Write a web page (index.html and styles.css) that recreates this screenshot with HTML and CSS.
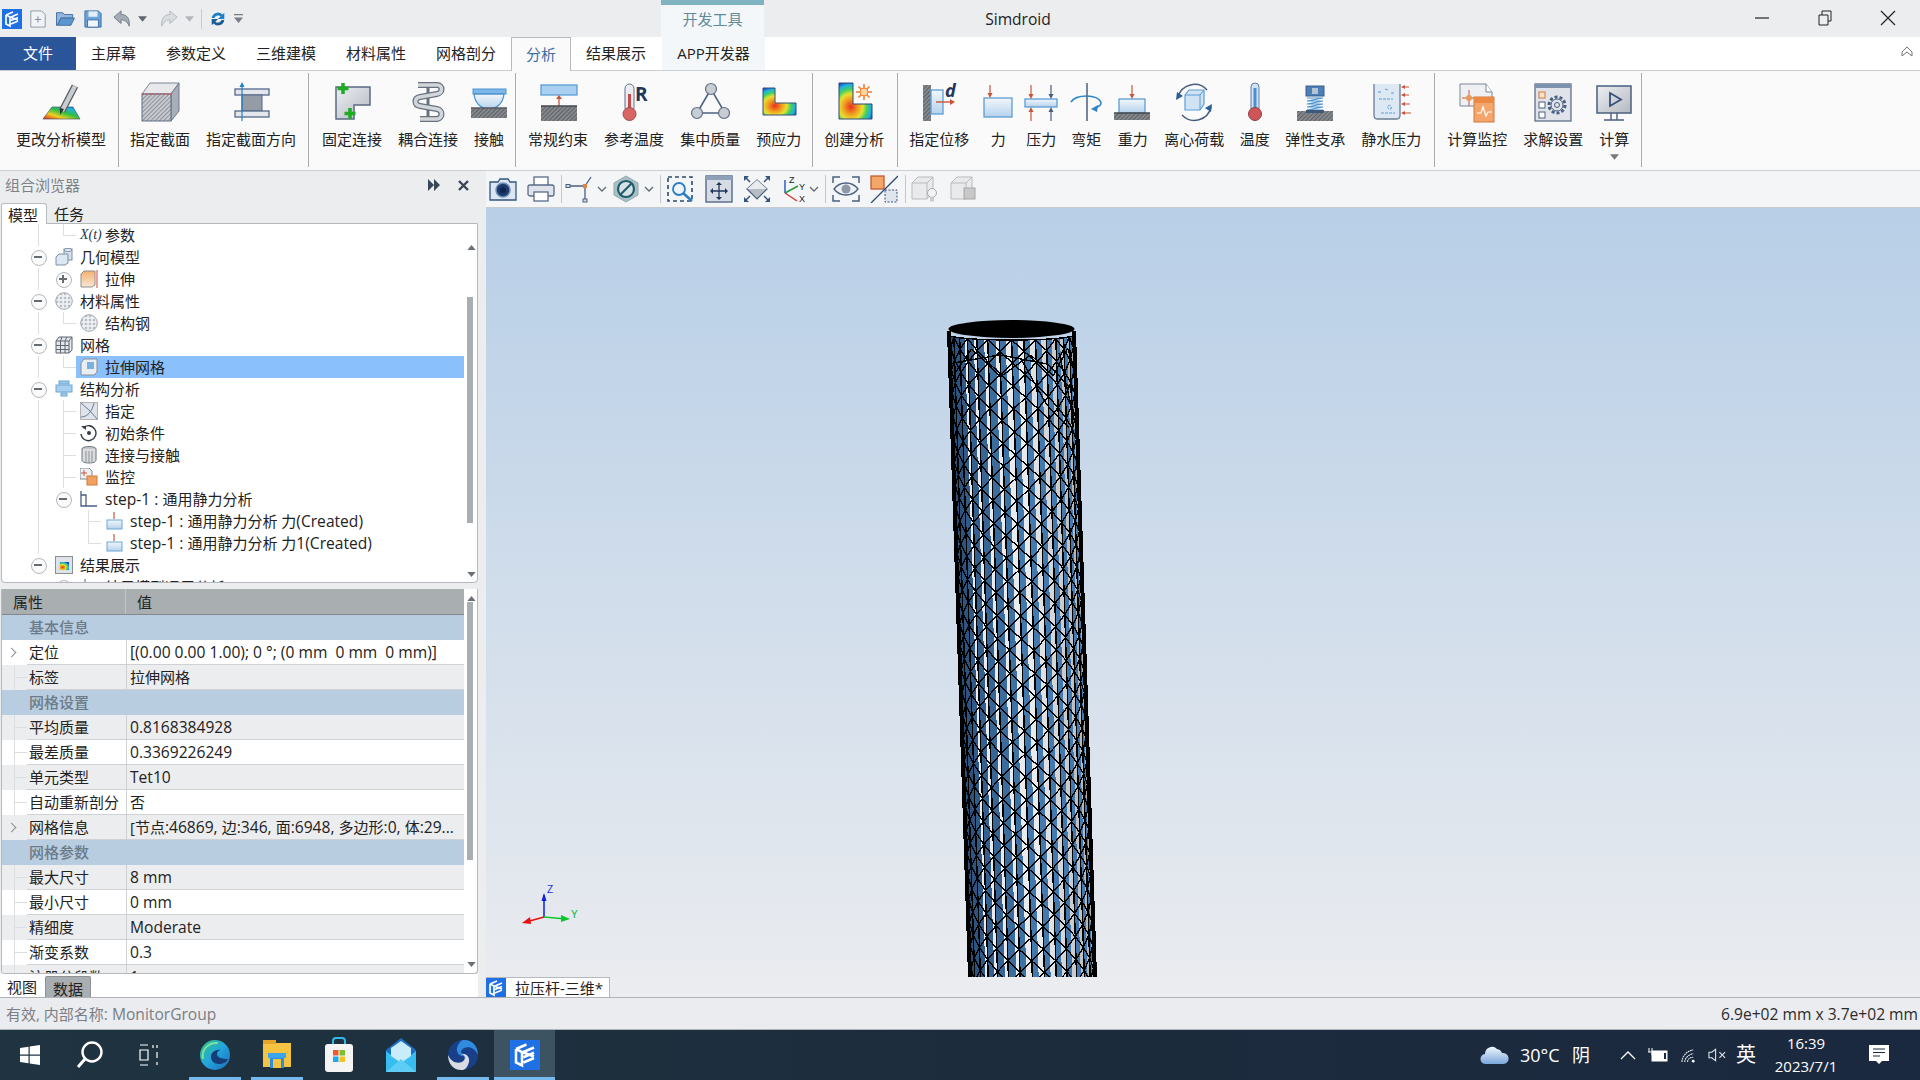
FILE: index.html
```html
<!DOCTYPE html>
<html lang="zh-CN">
<head>
<meta charset="utf-8">
<title>Simdroid</title>
<link rel="stylesheet" href="styles.css">
</head>
<body>
<svg class="defs" aria-hidden="true">
  <defs>
    <linearGradient id="rb" x1="0" y1="1" x2="1" y2="0"><stop offset="0" stop-color="#e02020"/><stop offset=".3" stop-color="#f0d020"/><stop offset=".55" stop-color="#30c040"/><stop offset=".8" stop-color="#20b0e0"/><stop offset="1" stop-color="#2040d0"/></linearGradient>
    <radialGradient id="rc" cx=".36" cy=".66" r=".72"><stop offset="0" stop-color="#e83020"/><stop offset=".3" stop-color="#f0a020"/><stop offset=".5" stop-color="#e8e030"/><stop offset=".68" stop-color="#40d060"/><stop offset=".85" stop-color="#20b0e0"/><stop offset="1" stop-color="#2040c0"/></radialGradient>
    <linearGradient id="gb" x1="0" y1="0" x2="0" y2="1"><stop offset="0" stop-color="#f2f7fc"/><stop offset="1" stop-color="#b5d2ec"/></linearGradient>
    <linearGradient id="gy" x1="0" y1="0" x2="1" y2="1"><stop offset="0" stop-color="#eceef1"/><stop offset="1" stop-color="#b4b9c2"/></linearGradient>
    <linearGradient id="go" x1="0" y1="0" x2="0" y2="1"><stop offset="0" stop-color="#f4b070"/><stop offset="1" stop-color="#fbe6d2"/></linearGradient>
    <pattern id="hatch" width="3" height="3" patternUnits="userSpaceOnUse" patternTransform="rotate(45)"><rect width="3" height="3" fill="#c6c9ce"/><rect width="1" height="3" fill="#8f949b"/></pattern>
    <pattern id="gnd" width="3" height="3" patternUnits="userSpaceOnUse" patternTransform="rotate(45)"><rect width="3" height="3" fill="#85898e"/><rect width="1" height="3" fill="#5d6166"/></pattern>
    <pattern id="dots" width="4" height="4" patternUnits="userSpaceOnUse"><rect width="4" height="4" fill="#eef0f3"/><circle cx="2" cy="2" r="1.300" fill="#b9bec6"/></pattern>
    <symbol id="logo" viewBox="0 0 20 20"><rect width="20" height="20" fill="#1f6fe5"/><path d="M4 6 11 3M4 6v9l4 2V8L4 6M9 8l7-3M9 11.500l7-3M9 15l7-3M8 8l8 3" fill="none" stroke="#fff" stroke-width="1.700"/></symbol>
    <symbol id="mat" viewBox="0 0 18 18"><circle cx="9" cy="9" r="8.300" fill="url(#dots)" stroke="#a4a9b0"/></symbol>
    <symbol id="frc" viewBox="0 0 18 18"><rect x="2" y="8" width="15" height="9" fill="url(#gb)" stroke="#6ba6d6"/><path d="M9 0v7" stroke="#c8553a" stroke-width="1.200"/></symbol>
    <symbol id="cube" viewBox="0 0 28 28"><path d="M2 8 8 2h15v15l-6 7H2z" fill="#e9eaeb" stroke="#b9bbbe"/><path d="M2 8h15v16M17 8l6-6" fill="none" stroke="#b9bbbe"/></symbol>
  </defs>
</svg>

<div class="app">
  <header class="titlebar">
    <div class="qat">
      <svg class="q22" viewBox="0 0 20 20"><use href="#logo"/></svg>
      <svg class="qi q-new" viewBox="0 0 20 20"><path d="M2 1h12l4 4v14H2z" fill="#f1f3f6" stroke="#8a94a3"/><path d="M10 7v7M6.500 10.500h7" stroke="#7b8594"/></svg>
      <svg class="qi q-open" viewBox="0 0 22 20"><path d="M1 17V3h7l2 2h9v4H6L2 17z" fill="#8fb5dc" stroke="#3f6b9e"/><path d="M2 17 6 9h15l-4 8z" fill="#5d95cf" stroke="#3f6b9e"/></svg>
      <svg class="qi q-save" viewBox="0 0 20 20"><path d="M1 1h15l3 3v15H1z" fill="#6ca4d9" stroke="#376a9f"/><rect x="5" y="1.500" width="10" height="6" fill="#e2edf7"/><rect x="4" y="11" width="12" height="8" fill="#f2f6fa" stroke="#376a9f"/></svg>
      <svg class="qi q-undo" viewBox="0 0 20 20"><path d="M1 8 9 1v4c6 0 10 4 9 13-2-5-5-7-9-7v4z" fill="#a5acb6" stroke="#6f7784"/></svg>
      <svg class="caret q-c1" viewBox="0 0 10 6"><path d="M0 0h10L5 6z" fill="#606770"/></svg>
      <svg class="qi q-redo" viewBox="0 0 20 20"><path d="M19 8 11 1v4C5 5 1 9 2 18c2-5 5-7 9-7v4z" fill="#d9dce0" stroke="#b1b6bd"/></svg>
      <svg class="caret q-c2" viewBox="0 0 10 6"><path d="M0 0h10L5 6z" fill="#b3b7bd"/></svg>
      <span class="q-sep"></span>
      <svg class="qi q-ref" viewBox="0 0 20 20"><path d="M3 9a7 7 0 0 1 12-4l2-2v7h-7l3-3a4.500 4.500 0 0 0-7 2z" fill="#1f7fc4"/><path d="M17 11a7 7 0 0 1-12 4l-2 2v-7h7l-3 3a4.500 4.500 0 0 0 7-2z" fill="#1b5d96"/></svg>
      <svg class="caret q-c3" viewBox="0 0 10 10"><path d="M0 0h10v1.500H0zM0 4h10L5 10z" fill="#767c85"/></svg>
    </div>
    <div class="ctx-tab">开发工具</div>
    <div class="app-name"><span class="lat">Simdroid</span></div>
    <div class="winbtns">
      <svg class="wb" viewBox="0 0 16 16"><path d="M1 8h14" stroke="#222" stroke-width="1.200"/></svg>
      <svg class="wb" viewBox="0 0 16 16"><path d="M2 5h9v10H2zM5 5V1h9v10h-3" fill="none" stroke="#222"/></svg>
      <svg class="wb" viewBox="0 0 16 16"><path d="M1 1l14 14M15 1 1 15" stroke="#222" stroke-width="1.200"/></svg>
    </div>
  </header>

  <nav class="tabs">
    <div class="tab file">文件</div>
    <div class="tab">主屏幕</div>
    <div class="tab">参数定义</div>
    <div class="tab">三维建模</div>
    <div class="tab">材料属性</div>
    <div class="tab">网格剖分</div>
    <div class="tab active">分析</div>
    <div class="tab">结果展示</div>
    <div class="tab app-tab">APP开发器</div>
    <svg class="collapse" viewBox="0 0 12 12"><path d="M6 1 11 6v4l-5-4-5 4V6z" fill="#fff" stroke="#777"/></svg>
  </nav>

  <section class="ribbon">
    <div class="group first">
      <div class="rb"><svg class="ri" viewBox="0 0 40 44"><polygon points="2,39 39,39 32,27 11,27" fill="url(#rb)" stroke="#3a3f55" stroke-width=".6"/><path d="M34 6 21 31" stroke="#55585e" stroke-width="7"/><path d="M34 6 21 31" stroke="#c9ccd0" stroke-width="4.500"/><path d="M23 29 19 35l0-7z" fill="#333"/></svg><span>更改分析模型</span></div>
    </div>
    <div class="group">
      <div class="rb"><svg class="ri" viewBox="0 0 40 44"><polygon points="2,14 31,14 39,3 10,3" fill="#e6e8eb" stroke="#7d8794"/><polygon points="31,14 39,3 39,31 31,41" fill="#a9afb9" stroke="#6f7986"/><rect x="2" y="14" width="29" height="27" fill="url(#hatch)" stroke="#5f6f88"/><path d="M2 14h29" stroke="#e04040" stroke-dasharray="2 1.500"/></svg><span>指定截面</span></div>
      <div class="rb"><svg class="ri" viewBox="0 0 40 44"><rect x="4" y="9" width="34" height="6" fill="#e3e7ec" stroke="#55678a" stroke-width="1.300"/><rect x="11" y="15" width="20" height="16" fill="#969ca5" stroke="#55678a"/><rect x="4" y="31" width="34" height="6" fill="#e3e7ec" stroke="#55678a" stroke-width="1.300"/><path d="M11 5v36" stroke="#1f80c8" stroke-width="1.200"/><path d="M11 2 8.500 7h5z" fill="#1f80c8"/></svg><span>指定截面方向</span></div>
    </div>
    <div class="group g3">
      <div class="rb"><svg class="ri" viewBox="0 0 40 44"><path d="M4 7h34v18H22v14H4z" fill="url(#gy)" stroke="#5a6b85" stroke-width="1.500"/><path d="M11 3v11M5.500 8.500h11M18 28v11M12.500 33.500h11" stroke="#1dab23" stroke-width="3.500"/></svg><span>固定连接</span></div>
      <div class="rb"><svg class="ri" viewBox="0 0 40 44"><path d="M20 3v38" stroke="#68727f" stroke-width="3"/><path d="M10 5h19c6 0 6 8 0 9L12 17c-6 1-6 8 0 9l17 3c6 1 6 9 0 10H12" fill="none" stroke="#68727f" stroke-width="6"/><path d="M10 5h19c6 0 6 8 0 9L12 17c-6 1-6 8 0 9l17 3c6 1 6 9 0 10H12" fill="none" stroke="#d2d6db" stroke-width="3.500"/></svg><span>耦合连接</span></div>
      <div class="rb"><svg class="ri" viewBox="0 0 40 44"><rect x="4" y="9" width="33" height="5" fill="#7cb7e6" stroke="#4d94cf"/><path d="M5 14c1 10 8 15 15 15s14-5 15-15z" fill="url(#gb)" stroke="#4d94cf" stroke-width="1.300"/><rect x="2" y="28" width="36" height="10" fill="url(#gnd)"/><path d="M2 28h36" stroke="#55585e" stroke-width="1.400"/></svg><span>接触</span></div>
    </div>
    <div class="group g4">
      <div class="rb"><svg class="ri" viewBox="0 0 40 44"><rect x="3" y="5" width="36" height="10" fill="#a9d0f0" stroke="#5c9dd4" stroke-width="1.300"/><path d="M21 26V17" stroke="#c8553a" stroke-width="1.300"/><path d="M21 15l-3 4h6z" fill="#c8553a"/><rect x="3" y="26" width="36" height="15" fill="url(#gnd)"/><path d="M3 26h36" stroke="#45484e" stroke-width="1.400"/></svg><span>常规约束</span></div>
      <div class="rb"><svg class="ri" viewBox="0 0 40 44"><rect x="11" y="4" width="9" height="28" rx="4.500" fill="#e9edf2" stroke="#5f6f88"/><rect x="14" y="14" width="3" height="20" fill="#c9494a"/><circle cx="15.500" cy="34" r="6.500" fill="#d96565" stroke="#9e4a4a"/><text class="ic-r" x="21" y="21">R</text></svg><span>参考温度</span></div>
      <div class="rb"><svg class="ri" viewBox="0 0 40 44"><path d="M21 9 7 33h28z" fill="none" stroke="#4e6285" stroke-width="1.600"/><circle cx="21" cy="9" r="5.500" fill="#c8ccd3" stroke="#5f6f88" stroke-width="1.200"/><circle cx="7" cy="33" r="5.500" fill="#c8ccd3" stroke="#5f6f88" stroke-width="1.200"/><circle cx="34" cy="33" r="5.500" fill="#c8ccd3" stroke="#5f6f88" stroke-width="1.200"/></svg><span>集中质量</span></div>
      <div class="rb"><svg class="ri" viewBox="0 0 40 44"><path d="M4 8h12v15h21v12H4z" fill="url(#rc)" stroke="#34507a"/></svg><span>预应力</span></div>
    </div>
    <div class="group g5">
      <div class="rb"><svg class="ri" viewBox="0 0 40 44"><path d="M5 3h14v21h19v15H5z" fill="url(#rc)" stroke="#2c4a78"/><path d="M30 4v16M22 12h16M24.500 6.500l11 11M35.500 6.500l-11 11" stroke="#f08030" stroke-width="1.600"/><circle cx="30" cy="12" r="4" fill="#fbd5a0" stroke="#f08030"/></svg><span>创建分析</span></div>
    </div>
    <div class="group g5">
      <div class="rb"><svg class="ri" viewBox="0 0 40 44"><rect x="4" y="5" width="8" height="36" fill="url(#gnd)"/><rect x="12" y="10" width="12" height="24" fill="url(#gb)" stroke="#5c9dd4" stroke-width="1.300"/><path d="M17 22h16" stroke="#c8553a" stroke-width="1.400"/><path d="M36 22l-5-3v6z" fill="#c8553a"/><text class="ic-d" x="26" y="17">d</text></svg><span>指定位移</span></div>
      <div class="rb w42"><svg class="ri" viewBox="0 0 40 44"><rect x="6" y="18" width="28" height="19" fill="url(#gb)" stroke="#5c9dd4" stroke-width="1.300"/><path d="M12 5v11" stroke="#c8553a" stroke-width="1.200"/><path d="M12 18l-2.500-5h5z" fill="#c8553a"/></svg><span>力</span></div>
      <div class="rb w44"><svg class="ri" viewBox="0 0 40 44"><rect x="4" y="19" width="32" height="8" fill="url(#gb)" stroke="#5c9dd4" stroke-width="1.300"/><path d="M10 5v12M10 29v12" stroke="#c8553a" stroke-width="1.200"/><path d="M10 19l-2.500-5h5zM10 27l-2.500 5h5z" fill="#c8553a"/><path d="M30 5v12M30 29v12" stroke="#4a5f80" stroke-width="1.200"/><path d="M30 19l-2.500-5h5zM30 27l-2.500 5h5z" fill="#4a5f80"/></svg><span>压力</span></div>
      <div class="rb w46"><svg class="ri" viewBox="0 0 40 44"><path d="M21 3v38" stroke="#4a5f80" stroke-width="1.500"/><path d="M5 22c3-5 10-6 16-6s13 2 14 7c0 3-3 4-6 5" fill="none" stroke="#2d84c4" stroke-width="1.600"/><path d="M25 29l7-4-1 7z" fill="#2d84c4"/></svg><span>弯矩</span></div>
      <div class="rb w47"><svg class="ri" viewBox="0 0 40 44"><rect x="6" y="19" width="26" height="14" fill="url(#gb)" stroke="#5c9dd4" stroke-width="1.300"/><path d="M19 5v11" stroke="#c8553a" stroke-width="1.200"/><path d="M19 19l-2.500-5h5z" fill="#c8553a"/><rect x="1" y="33" width="36" height="7" fill="url(#gnd)"/><path d="M1 33h36" stroke="#45484e" stroke-width="1.300"/></svg><span>重力</span></div>
      <div class="rb"><svg class="ri" viewBox="0 0 40 44"><path d="M11 15 15 10h15v14l-4 6H11z" fill="#cfe3f5" stroke="#5c9dd4" stroke-width="1.200"/><path d="M11 15h15v15M26 15l4-5" fill="none" stroke="#5c9dd4"/><path d="M4 17A17 17 0 0 1 33 10M37 27A17 17 0 0 1 8 35" fill="none" stroke="#4a5f80" stroke-width="1.500"/><path d="M2 20 3 12l6 4zM38 24l-1 8-6-4z" fill="#2d5f94"/></svg><span>离心荷载</span></div>
      <div class="rb w45"><svg class="ri" viewBox="0 0 40 44"><rect x="16" y="3" width="8" height="30" rx="4" fill="#cfe3f5" stroke="#5f7fa8"/><rect x="18.500" y="8" width="3" height="26" fill="#4d8fd0"/><circle cx="20" cy="34" r="6.500" fill="#cf5558" stroke="#8f4044"/></svg><span>温度</span></div>
      <div class="rb"><svg class="ri" viewBox="0 0 40 44"><rect x="11" y="6" width="18" height="10" fill="#4a7fb8" stroke="#3a5f8a"/><rect x="17" y="8" width="6" height="6" fill="#b4c4d4"/><path d="M12 18h16L12 21h16L12 24h16L12 27h16L12 30h16" fill="none" stroke="#4d94cf" stroke-width="1.100"/><rect x="2" y="31" width="36" height="10" fill="url(#gnd)"/><rect x="11" y="30" width="18" height="3" fill="#3f5878"/></svg><span>弹性支承</span></div>
      <div class="rb"><svg class="ri" viewBox="0 0 40 44"><path d="M3 4v31c0 2 1 4 3 4h20c2 0 3-2 3-4V4" fill="#dce9f5" stroke="#6b7c94" stroke-width="1.300"/><path d="M7 12h4M14 9l3 1M20 13h4M8 19h14M17 26c2-2 4 1 3 3-2 1-4-1-3-3M10 33h14" stroke="#5c9dd4" fill="none" stroke-dasharray="3 1"/><path d="M32 7h6M32 15h6M32 24h7M32 33h8" stroke="#c8553a" stroke-width="1.200"/><path d="M30 7l4-2v4zM30 15l4-2v4zM30 24l4-2v4zM30 33l4-2v4z" fill="#c8553a"/></svg><span>静水压力</span></div>
    </div>
    <div class="group g7">
      <div class="rb"><svg class="ri" viewBox="0 0 40 44"><path d="M3 4h26l6 8v14H3z" fill="#eef0f3" stroke="#7d8794"/><path d="M29 4v8h6" fill="#fff" stroke="#7d8794"/><path d="M12 10v16M5 18h15" stroke="#c8553a"/><circle cx="12" cy="18" r="3" fill="#e99a5a"/><rect x="17" y="17" width="20" height="25" fill="#f3a56b" stroke="#d07a3a"/><rect x="17" y="17" width="20" height="6" fill="#ec8a45"/><path d="M20 33h4l2-6 3 9 2-4h4" fill="none" stroke="#fff" stroke-width="1.200"/></svg><span>计算监控</span></div>
      <div class="rb"><svg class="ri" viewBox="0 0 40 44"><rect x="2" y="4" width="36" height="37" fill="#e0e4ea" stroke="#5f6f88" stroke-width="1.300"/><rect x="2" y="4" width="36" height="4" fill="#7d93b0"/><rect x="6" y="12" width="6" height="6" fill="#fde3cc" stroke="#d07a3a"/><rect x="6" y="22" width="6" height="6" fill="#fff" stroke="#4a5f80"/><rect x="6" y="32" width="6" height="6" fill="#fff" stroke="#4a5f80"/><circle cx="24" cy="25" r="8" fill="none" stroke="#4a5f80" stroke-width="3" stroke-dasharray="3 2"/><circle cx="24" cy="25" r="6" fill="none" stroke="#4a5f80"/><circle cx="24" cy="25" r="2.500" fill="#e0e4ea" stroke="#4a5f80"/></svg><span>求解设置</span></div>
      <div class="rb calc"><svg class="ri" viewBox="0 0 40 44"><rect x="3" y="6" width="34" height="27" fill="url(#gy)" stroke="#4a5f80" stroke-width="1.500"/><path d="M16 13v13l11-6.500z" fill="none" stroke="#34507a" stroke-width="1.800"/><path d="M17 33v7M23 33v7M10 40h20" stroke="#4a5f80" stroke-width="1.400"/></svg><span>计算</span><svg class="calc-caret" viewBox="0 0 10 6"><path d="M0 0h10L5 6z" fill="#777"/></svg></div>
    </div>
  </section>

  <main class="main">
    <aside class="left">
      <div class="panel-head">
        <span class="ph-title">组合浏览器</span>
        <svg class="ph-i1" viewBox="0 0 13 12"><path d="M0 0 6 6 0 12zM6 0l6 6-6 6z" fill="#3a4556"/></svg>
        <svg class="ph-i2" viewBox="0 0 11 11"><path d="M1 1l9 9M10 1l-9 9" stroke="#3a4556" stroke-width="2.400"/></svg>
      </div>
      <div class="ptabs"><span class="ptab on">模型</span><span class="ptab">任务</span></div>
      <div class="tree">
        <div class="row"><i class="c"></i><i class="c v"></i><i class="c l"></i><div class="lab"><span class="xt">X(t)</span><span>参数</span></div></div>
        <div class="row"><i class="c"></i><i class="c x m"></i><div class="lab"><svg class="ti" viewBox="0 0 18 18"><rect x="9" y="1" width="8" height="11" fill="#d5e3f0" stroke="#7d8fa5"/><ellipse cx="13" cy="2" rx="4" ry="1.500" fill="#eef3f8" stroke="#7d8fa5"/><path d="M1 9 4 6h9v9l-3 2H1z" fill="#dbe7f3" stroke="#7d8fa5"/></svg><span>几何模型</span></div></div>
        <div class="row"><i class="c"></i><i class="c v"></i><i class="c x p"></i><div class="lab"><svg class="ti" viewBox="0 0 18 18"><path d="M1 4 4 1h11v14l-3 2H1z" fill="url(#go)" stroke="#8a8f96"/><path d="M17 0v18" stroke="#d04040"/></svg><span>拉伸</span></div></div>
        <div class="row"><i class="c"></i><i class="c x m"></i><div class="lab"><svg class="ti" viewBox="0 0 18 18"><use href="#mat"/></svg><span>材料属性</span></div></div>
        <div class="row"><i class="c"></i><i class="c v"></i><i class="c l"></i><div class="lab"><svg class="ti" viewBox="0 0 18 18"><use href="#mat"/></svg><span>结构钢</span></div></div>
        <div class="row"><i class="c"></i><i class="c x m"></i><div class="lab"><svg class="ti" viewBox="0 0 18 18"><path d="M1 5 4 1h13v13l-3 3H1z" fill="#e4e7eb" stroke="#5f6771"/><path d="M1 5h13v12M14 5l3-4M5.500 5v12M10 5v12M1 9.500h13M1 13.500h13M7 1 5.500 5M12 1l-2 4" fill="none" stroke="#5f6771"/></svg><span>网格</span></div></div>
        <div class="row"><i class="c"></i><i class="c v"></i><i class="c l"></i><div class="lab sel"><svg class="ti" viewBox="0 0 18 18"><path d="M1 5 4 1h13v13l-3 3H1z" fill="#e9eef3" stroke="#8a8f96"/><rect x="7" y="4" width="7" height="7" fill="#77b2df"/></svg><span>拉伸网格</span></div></div>
        <div class="row"><i class="c"></i><i class="c x m"></i><div class="lab"><svg class="ti" viewBox="0 0 18 18"><rect x="4" y="1" width="10" height="3" fill="#9fc9ea" stroke="#6ba6d6"/><rect x="1" y="5" width="16" height="7" fill="#a8d0ee" stroke="#6ba6d6"/><rect x="6" y="13" width="6" height="3" fill="#9fc9ea" stroke="#6ba6d6"/></svg><span>结构分析</span></div></div>
        <div class="row"><i class="c"></i><i class="c v"></i><i class="c t"></i><div class="lab"><svg class="ti" viewBox="0 0 18 18"><rect x="0.500" y="0.500" width="17" height="17" fill="#e1e3e7" stroke="#b0b4ba"/><path d="M1 1 10 9 17 17M1 15c6 0 11-5 13-14" fill="none" stroke="#5a7ea5"/></svg><span>指定</span></div></div>
        <div class="row"><i class="c"></i><i class="c v"></i><i class="c t"></i><div class="lab"><svg class="ti" viewBox="0 0 18 18"><path d="M3 4a7.500 7.500 0 1 1-2 6" fill="none" stroke="#333c48" stroke-width="1.400"/><path d="M1 2h5v4z" fill="#333c48"/><circle cx="9" cy="9" r="2" fill="#333c48"/></svg><span>初始条件</span></div></div>
        <div class="row"><i class="c"></i><i class="c v"></i><i class="c t"></i><div class="lab"><svg class="ti" viewBox="0 0 18 18"><ellipse cx="9" cy="3" rx="7" ry="2.500" fill="#c2c6cb" stroke="#6e7680"/><path d="M2 3v11c0 2 3 3 7 3s7-1 7-3V3" fill="#dadcdf" stroke="#6e7680"/><path d="M6 5v11M9 5v12M12 5v11" stroke="#8d939b"/></svg><span>连接与接触</span></div></div>
        <div class="row"><i class="c"></i><i class="c v"></i><i class="c t"></i><div class="lab"><svg class="ti" viewBox="0 0 18 18"><path d="M0 0h9l3 3v8H0z" fill="#eef0f3" stroke="#7d8794"/><path d="M4 2v6M1 5h6" stroke="#c8553a"/><rect x="7" y="8" width="10" height="9" fill="#f0a060" stroke="#d07a3a"/></svg><span>监控</span></div></div>
        <div class="row"><i class="c"></i><i class="c v"></i><i class="c x m"></i><div class="lab"><svg class="ti" viewBox="0 0 18 18"><path d="M1 1v15h16M1 5h5v11" fill="none" stroke="#4a5f80" stroke-width="1.300"/></svg><span><span class="lat">step-1 : </span>通用静力分析</span></div></div>
        <div class="row"><i class="c"></i><i class="c v"></i><i class="c"></i><i class="c t"></i><div class="lab"><svg class="ti" viewBox="0 0 18 18"><use href="#frc"/></svg><span><span class="lat">step-1 : </span>通用静力分析 力<span class="lat">(Created)</span></span></div></div>
        <div class="row"><i class="c"></i><i class="c v"></i><i class="c"></i><i class="c l"></i><div class="lab"><svg class="ti" viewBox="0 0 18 18"><use href="#frc"/></svg><span><span class="lat">step-1 : </span>通用静力分析 力<span class="lat">1(Created)</span></span></div></div>
        <div class="row"><i class="c"></i><i class="c x m"></i><div class="lab"><svg class="ti" viewBox="0 0 18 18"><rect x="0.500" y="0.500" width="17" height="17" fill="#dfe2e6" stroke="#8a8f96"/><path d="M5 6h9v8H4z" fill="url(#rc)"/></svg><span>结果展示</span></div></div>
        <div class="row"><i class="c"></i><i class="c"></i><i class="c x m"></i><div class="lab"><svg class="ti" viewBox="0 0 18 18"><path d="M5 1v15h12" fill="none" stroke="#4a5f80"/></svg><span>结果模型通用分析</span></div></div>
        <svg class="sb-up" viewBox="0 0 10 6"><path d="M5 0l5 6H0z" fill="#6a7078"/></svg>
        <div class="sb-thumb tree-thumb"></div>
        <svg class="sb-dn" viewBox="0 0 10 6"><path d="M0 0h10L5 6z" fill="#6a7078"/></svg>
      </div>
      <div class="props">
        <div class="phead"><span class="ph-k">属性</span><span class="ph-v">值</span></div>
        <div class="prow group-r"><span class="pi"></span><span class="pk">基本信息</span></div>
        <div class="prow"><span class="pi chev"></span><span class="pk">定位</span><span class="pv lat">[(0.00 0.00 1.00); 0 °; (0 mm &nbsp;0 mm &nbsp;0 mm)]</span></div>
        <div class="prow alt"><span class="pi gl"></span><span class="pk">标签</span><span class="pv">拉伸网格</span></div>
        <div class="prow group-r"><span class="pi"></span><span class="pk">网格设置</span></div>
        <div class="prow alt"><span class="pi gl"></span><span class="pk">平均质量</span><span class="pv lat">0.8168384928</span></div>
        <div class="prow"><span class="pi gl"></span><span class="pk">最差质量</span><span class="pv lat">0.3369226249</span></div>
        <div class="prow alt"><span class="pi gl"></span><span class="pk">单元类型</span><span class="pv lat">Tet10</span></div>
        <div class="prow"><span class="pi gl"></span><span class="pk">自动重新剖分</span><span class="pv">否</span></div>
        <div class="prow alt"><span class="pi chev"></span><span class="pk">网格信息</span><span class="pv">[节点<span class="lat">:46869, </span>边<span class="lat">:346, </span>面<span class="lat">:6948, </span>多边形<span class="lat">:0, </span>体<span class="lat">:29...</span></span></div>
        <div class="prow group-r"><span class="pi"></span><span class="pk">网格参数</span></div>
        <div class="prow alt"><span class="pi gl"></span><span class="pk">最大尺寸</span><span class="pv lat">8 mm</span></div>
        <div class="prow"><span class="pi gl"></span><span class="pk">最小尺寸</span><span class="pv lat">0 mm</span></div>
        <div class="prow alt"><span class="pi gl"></span><span class="pk">精细度</span><span class="pv lat">Moderate</span></div>
        <div class="prow"><span class="pi gl"></span><span class="pk">渐变系数</span><span class="pv lat">0.3</span></div>
        <div class="prow alt"><span class="pi gl"></span><span class="pk">注册分段数</span><span class="pv lat">1</span></div>
        <svg class="sb-up p-up" viewBox="0 0 10 6"><path d="M5 0l5 6H0z" fill="#6a7078"/></svg>
        <div class="sb-thumb prop-thumb"></div>
        <svg class="sb-dn p-dn" viewBox="0 0 10 6"><path d="M0 0h10L5 6z" fill="#6a7078"/></svg>
      </div>
      <div class="btabs"><span class="btab">视图</span><span class="btab on">数据</span></div>
    </aside>

    <section class="right">
      <div class="vtool">
        <svg class="vi" viewBox="0 0 28 28"><path d="M1 7h8l2-3h8l2 3h6v18H1z" fill="#dbe6f2" stroke="#34547e" stroke-width="1.300"/><circle cx="14" cy="15" r="7" fill="#1d3a6d" stroke="#6e8fb5" stroke-width="1.500"/><circle cx="14" cy="15" r="3" fill="#10254d"/></svg>
        <svg class="vi ml10" viewBox="0 0 28 28"><rect x="7" y="2" width="14" height="9" fill="#fff" stroke="#5a6b85" stroke-width="1.300"/><rect x="1" y="10" width="26" height="11" rx="2" fill="#dfe4ea" stroke="#5a6b85" stroke-width="1.300"/><rect x="7" y="17" width="14" height="9" fill="#fff" stroke="#5a6b85" stroke-width="1.300"/></svg>
        <span class="vsep ml6"></span>
        <svg class="vi wide ml3" viewBox="0 0 32 28"><path d="M3 11h17v15M20 11 26 2" fill="none" stroke="#4a5f80" stroke-width="1.300"/><rect x="1" y="9.500" width="4" height="3" fill="#d6dae0" stroke="#4a5f80"/><rect x="18" y="24" width="4" height="3" fill="#d6dae0" stroke="#4a5f80"/><rect x="18" y="9" width="4" height="4" fill="#e0853d"/></svg>
        <svg class="chev-i" viewBox="0 0 10 6"><path d="M1 1l4 4 4-4" fill="none" stroke="#5f6a78" stroke-width="1.300"/></svg>
        <svg class="vi ml5" viewBox="0 0 28 28"><polygon points="14,1 26,8 26,20 14,27 2,20 2,8" fill="#a9bfc3" stroke="#92aab0"/><circle cx="14" cy="14" r="8" fill="#d7e1e3" stroke="#1f5c6d" stroke-width="2.200"/><path d="M8 20 20 8" stroke="#1f5c6d" stroke-width="2.200"/></svg>
        <svg class="chev-i ml4" viewBox="0 0 10 6"><path d="M1 1l4 4 4-4" fill="none" stroke="#5f6a78" stroke-width="1.300"/></svg>
        <span class="vsep ml6"></span>
        <svg class="vi ml5" viewBox="0 0 28 28"><rect x="2" y="2" width="24" height="24" fill="none" stroke="#2f4a72" stroke-width="1.600" stroke-dasharray="4 3"/><circle cx="13" cy="14" r="6" fill="#eef4fa" stroke="#2a7fc0" stroke-width="1.800"/><path d="M17 18l9 8" stroke="#2a7fc0" stroke-width="2.600"/></svg>
        <svg class="vi ml11" viewBox="0 0 28 28"><rect x="1" y="1" width="26" height="26" fill="#d6dce6" stroke="#4a5f80" stroke-width="1.300"/><rect x="1" y="1" width="26" height="4" fill="#8ea0b8"/><path d="M14 9v14M7 16h14" stroke="#22365a" stroke-width="1.300"/><path d="M14 7l-3 3h6zM14 25l-3-3h6zM5 16l3-3v6zM23 16l-3-3v6z" fill="#22365a"/></svg>
        <svg class="vi ml10" viewBox="0 0 28 28"><polygon points="14,5 24,14 14,24 4,14" fill="#b8bcc3" stroke="#4a5f80" stroke-width="1.200"/><polygon points="14,5 24,14 4,14" fill="#e9ebee"/><path d="M2 2l5 5M26 2l-5 5M2 26l5-5M26 26l-5-5" stroke="#34547e" stroke-width="1.500"/><path d="M1 1h5L1 6zM27 1h-5l5 5zM1 27h5l-5-5zM27 27h-5l5-5z" fill="#34547e"/></svg>
        <svg class="vi ml8" viewBox="0 0 28 28"><path d="M6 18V5" stroke="#2a5fc0" stroke-width="1.500"/><path d="M6 18 19 11" stroke="#2a9a40" stroke-width="1.500"/><path d="M6 18 18 26" stroke="#d83a3a" stroke-width="1.500"/><text class="ax" x="10" y="8">Z</text><text class="ax" x="20" y="15">Y</text><text class="ax" x="20" y="27">X</text></svg>
        <svg class="chev-i ml2" viewBox="0 0 10 6"><path d="M1 1l4 4 4-4" fill="none" stroke="#5f6a78" stroke-width="1.300"/></svg>
        <span class="vsep ml6"></span>
        <svg class="vi ml6" viewBox="0 0 28 28"><path d="M1 8V2h7M20 2h7v6M27 20v6h-7M8 26H1v-6" fill="none" stroke="#4a5f80" stroke-width="1.500"/><path d="M2 14c6-8 18-8 24 0-6 8-18 8-24 0z" fill="#eef1f5" stroke="#4a5f80" stroke-width="1.300"/><circle cx="14" cy="14" r="4.500" fill="#8d99a8"/></svg>
        <svg class="vi ml10" viewBox="0 0 28 28"><rect x="1" y="1" width="13" height="13" fill="#f4a56a" stroke="#c05a30" stroke-width="1.300"/><rect x="15" y="15" width="12" height="12" fill="#dfe5ec" stroke="#34547e" stroke-dasharray="2 1.500"/><path d="M1 28 28 1" stroke="#2f4a72" stroke-width="1.300"/></svg>
        <span class="vsep ml7"></span>
        <svg class="vi ml4" viewBox="0 0 28 28"><use href="#cube"/><circle cx="22" cy="18" r="4.500" fill="#f3f3f3" stroke="#aaa"/><rect x="20" y="22.500" width="4" height="4" fill="#ccc"/></svg>
        <svg class="vi ml11" viewBox="0 0 28 28"><use href="#cube"/><rect x="15" y="13" width="11" height="11" fill="#c8c8c8" stroke="#a5a5a5"/></svg>
      </div>
      <div class="viewport">
        <svg id="mesh" class="canvas3d"></svg>
        <svg class="triad" viewBox="0 0 60 50"><path d="M26 32V10" stroke="#0a1fe0" stroke-width="1.500"/><path d="M26 8l-2.500 8h5z" fill="#0a1fe0"/><path d="M26 32 48 34" stroke="#0ac828" stroke-width="1.500"/><path d="M52 34l-9-4v7z" fill="#0ac828"/><path d="M26 32 8 37" stroke="#e81010" stroke-width="1.500"/><path d="M4 38l8-6 1 7z" fill="#e81010"/><text class="tz" x="29" y="8">Z</text><text class="ty" x="53" y="33">Y</text></svg>
      </div>
      <div class="doctabs"><div class="doctab"><svg class="doclogo" viewBox="0 0 20 20"><use href="#logo"/></svg><span>拉压杆-三维*</span></div></div>
    </section>
  </main>

  <footer class="status"><span class="st-l">有效, 内部名称<span class="lat">: MonitorGroup</span></span><span class="st-r lat">6.9e+02 mm x 3.7e+02 mm</span></footer>

  <div class="taskbar">
    <div class="tbc w60"><svg class="tbi" viewBox="0 0 22 22"><path d="M1 4 9.500 2.800V10.500H1zM10.700 2.600 21 1V10.500H10.700zM1 11.700H9.500V19.200L1 18zM10.700 11.700H21V21L10.700 19.400z" fill="#fff"/></svg></div>
    <div class="tbc w60"><svg class="tbi big" viewBox="0 0 30 30"><circle cx="17" cy="12" r="9.500" fill="none" stroke="#fff" stroke-width="2.400"/><path d="M10 19 3 27" stroke="#fff" stroke-width="3"/></svg></div>
    <div class="tbc w60"><svg class="tbi" viewBox="0 0 22 22"><path d="M1 1h8M1 21h8M1 6h8v10H1zM14 1v3M18 1v3M18 8v6M18 18v3" fill="none" stroke="#fff" stroke-width="1.200"/></svg></div>
    <div class="tbc tapp ml4x on-line"><svg class="tba" viewBox="0 0 30 36"><defs><linearGradient id="ed" x1="0" y1="0" x2="1" y2="1"><stop offset="0" stop-color="#33c481"/><stop offset=".5" stop-color="#23a5dd"/><stop offset="1" stop-color="#1b6bb8"/></linearGradient></defs><circle cx="15" cy="18" r="15" fill="url(#ed)"/><path d="M28 22c-1 3-5 5-9 5-5 0-8-3-8-7 0-5 5-8 10-7-2 0-4 2-4 4 0 3 4 5 11 5z" fill="#153d78"/><path d="M3 22C1 12 9 5 18 6" fill="none" stroke="#7be0a0" stroke-width="2"/></svg></div>
    <div class="tbc tapp on-line"><svg class="tba" viewBox="0 0 30 36"><path d="M1 3h11l2 3h15v24H1z" fill="#f5c342"/><rect x="1" y="3" width="13" height="4" fill="#e5a52a"/><path d="M8 31V19h14v12" fill="#2b8fe0"/><rect x="11" y="22" width="8" height="9" fill="#f5c342"/><rect x="6" y="16" width="18" height="5" fill="#3aa5ee"/></svg></div>
    <div class="tbc tapp"><svg class="tba" viewBox="0 0 30 36"><path d="M9 7V4a3 3 0 0 1 3-3h6a3 3 0 0 1 3 3v3" fill="none" stroke="#30b8e8" stroke-width="2"/><rect x="1" y="7" width="28" height="28" rx="3" fill="#f4f4f4"/><rect x="9" y="13" width="5.500" height="5.500" fill="#f05a30"/><rect x="15.500" y="13" width="5.500" height="5.500" fill="#80c030"/><rect x="9" y="19.500" width="5.500" height="5.500" fill="#20a8f0"/><rect x="15.500" y="19.500" width="5.500" height="5.500" fill="#fac020"/></svg></div>
    <div class="tbc tapp"><svg class="tba" viewBox="0 0 30 36"><path d="M15 1 30 13v22H0V13z" fill="#1b6fc0"/><path d="M0 14 15 26 30 14v21H0z" fill="#38bdf0"/><path d="M5 11 15 4l10 7v8l-10 7-10-7z" fill="#c8ecf8"/><path d="M0 35 15 22l15 13z" fill="#5ecdf5"/></svg></div>
    <div class="tbc tapp on-line"><svg class="tba" viewBox="0 0 30 36"><circle cx="15" cy="18" r="15" fill="#183f88"/><path d="M15 3c9-1 15 6 15 15-3-7-9-9-14-7-4 2-4 7 1 8-6 1-9-4-8-8 1-4 3-7 6-8z" fill="#2f8ae0"/><path d="M15 33c-9 1-15-6-15-15 3 7 9 9 14 7 4-2 4-7-1-8 6-1 9 4 8 8-1 4-3 7-6 8z" fill="#d6dce2"/></svg></div>
    <div class="tbc tapp active-app"><svg class="tba" viewBox="0 0 20 20"><use href="#logo"/></svg></div>
    <div class="tray">
      <svg class="t-cloud" viewBox="0 0 30 20"><defs><linearGradient id="cl" x1="0" y1="0" x2="0" y2="1"><stop offset="0" stop-color="#f0f6fc"/><stop offset="1" stop-color="#7aa6dc"/></linearGradient></defs><path d="M6 19a5 5 0 0 1-1-10 7 7 0 0 1 12-5 6 6 0 0 1 5 4 5.500 5.500 0 0 1 2 11z" fill="url(#cl)"/></svg>
      <span class="t-temp">30°C</span>
      <span class="t-wea">阴</span>
      <svg class="t-car" viewBox="0 0 16 9"><path d="M1 8 8 1l7 7" fill="none" stroke="#fff" stroke-width="1.300"/></svg>
      <svg class="t-bat" viewBox="0 0 20 14"><rect x="4" y="3" width="15" height="10" fill="#fff" stroke="#fff"/><path d="M1 0v4M4 0v4M0 4h5v2H3" fill="none" stroke="#fff"/><rect x="16" y="5" width="2" height="6" fill="#1b2a40"/></svg>
      <svg class="t-wifi" viewBox="0 0 16 16"><path d="M1 15C1 9 6 3 13 2M4 15c0-4 4-8 9-9M7 15c0-3 2-5 6-5" fill="none" stroke="#eef1f4" stroke-width="1.100" stroke-dasharray="2 .6"/><circle cx="13" cy="14" r="1.500" fill="#fff"/></svg>
      <svg class="t-snd" viewBox="0 0 20 14"><path d="M1 4h3l4-3v12L4 10H1z" fill="none" stroke="#e6e9ec" stroke-width="1.100"/><path d="M12 4l6 6M18 4l-6 6" stroke="#e6e9ec" stroke-width="1.100"/></svg>
      <span class="t-ime">英</span>
      <div class="t-clock"><span>16:39</span><span>2023/7/1</span></div>
      <svg class="t-note" viewBox="0 0 20 20"><path d="M0 0h20v16h-7l-3 3-3-3H0z" fill="#fff"/><path d="M4 4h12M4 7.500h12M4 11h7" stroke="#1b2a40" stroke-width="1.200"/></svg>
    </div>
  </div>
</div>
<script src="mesh.js"></script>
</body>
</html>
```
FILE: styles.css
```css
* { box-sizing: border-box; }
html, body { margin: 0; height: 100%; overflow: hidden; }
body { font: 15px/20px "Open Sans", "Noto Sans CJK SC", sans-serif; color: #222; background: #ecedef; }
svg { display: block; flex: none; }
.defs { position: absolute; width: 0; height: 0; }
.app { width: 1920px; height: 1080px; display: flex; flex-direction: column; }
.lat { font-size: 15.6px; }

/* title bar */
.titlebar { height: 37px; background: #ecedef; display: flex; align-items: stretch; flex: none; }
.qat { width: 657px; margin-right: 4px; display: flex; align-items: center; padding-left: 2px; }
.q22 { width: 20px; height: 20px; }
.qi { width: 18px; height: 18px; }
.q-new { margin-left: 7px; }
.q-open { margin-left: 8px; width: 21px; }
.q-save { margin-left: 8px; }
.q-undo { margin-left: 10px; width: 20px; }
.caret { width: 9px; height: 6px; }
.q-c1 { margin-left: 6px; }
.q-redo { margin-left: 12px; width: 20px; }
.q-c2 { margin-left: 6px; }
.q-sep { width: 1px; height: 20px; background: #c8cacd; margin-left: 7px; }
.q-ref { margin-left: 7px; }
.q-c3 { margin-left: 7px; height: 9px; }
.ctx-tab { width: 103px; border-top: 5px solid #7fb3c0; background: #f3f7fa; color: #5f8a9a; text-align: center; line-height: 28px; }
.app-name { width: 508px; text-align: center; line-height: 38px; }
.winbtns { flex: 1; display: flex; justify-content: flex-end; align-items: center; gap: 47px; padding: 0 24px 2px 0; }
.wb { width: 16px; height: 16px; }

/* ribbon tabs */
.tabs { height: 33px; background: #fff; display: flex; align-items: stretch; flex: none; position: relative; }
.tab { padding: 0 15px; line-height: 33px; position: relative; white-space: nowrap; }
.tab.file { width: 76px; padding: 0; text-align: center; background: #2a5599; color: #fff; }
.tab.active { color: #3a6ea8; border: 1px solid #b8babd; border-bottom: 0; background: #fafafa; height: 34px; z-index: 1; padding: 0 14px; line-height: 32px; }
.tab.app-tab { margin-left: 1px; background: #f3f7fa; padding: 0; width: 103px; text-align: center; }
.collapse { position: absolute; right: 7px; top: 9px; width: 12px; height: 12px; }

/* ribbon */
.ribbon { height: 101px; flex: none; display: flex; background: #fafafa; border-top: 1px solid #ccced1; border-bottom: 1px solid #ccced1; }
.group { display: flex; padding: 0 4px 0 3px; margin: 2px 0; position: relative; border-right: 1px solid #a9acb0; height: 94px; }
.group.first { padding-left: 8px; }
.group.g3 { padding: 0 3px 0 5px; }
.group.g4 { padding: 0 3px 0 4px; }
.group.g5 { padding: 0 5px 0 3px; }
.group.g7 { padding: 0 4px 0 4px; }
.rb { display: flex; flex-direction: column; align-items: center; padding: 7px 8px 0; }
.rb span { margin-top: 5px; white-space: nowrap; line-height: 20px; }
.ri { width: 40px; height: 44px; margin: 0 -10px; }
.w42 { width: 42px; }
.w44 { width: 44px; }
.w45 { width: 45px; }
.w46 { width: 46px; }
.w47 { width: 47px; }
.calc { position: relative; }
.calc-caret { width: 9px; height: 6px; margin-top: 5px; }
.ic-r { font: bold 19px "Open Sans", sans-serif; fill: #22365a; }
.ic-d { font: italic bold 18px "Open Sans", sans-serif; fill: #22365a; }

/* main */
.main { flex: 1; min-height: 0; display: flex; }
.left { width: 486px; flex: none; display: flex; flex-direction: column; background: #ecedef; }
.panel-head { height: 32px; flex: none; display: flex; align-items: center; padding: 0 0 4px 5px; color: #7c8289; }
.ph-title { flex: 1; }
.ph-i1 { width: 13px; height: 12px; margin-right: 17px; }
.ph-i2 { width: 11px; height: 11px; margin-right: 17px; }
.ptabs { height: 20px; flex: none; display: flex; padding-left: 1px; position: relative; z-index: 1; }
.ptab { width: 46px; text-align: center; line-height: 22px; height: 21px; overflow: hidden; padding-right: 2px; }
.ptab.on { background: #fff; border: 1px solid #b8bbbf; border-bottom: 0; border-radius: 3px 3px 0 0; }

.tree { width: 477px; height: 360px; margin-left: 1px; flex: none; background: #fff; border: 1px solid #b5b8bc; border-radius: 0 0 4px 4px; overflow: hidden; position: relative; }
.row { display: flex; height: 22px; width: 462px; }
.c { display: block; width: 25px; height: 22px; flex: none; }
.c:first-child { width: 24px; }
.v { background: linear-gradient(#dcdee1, #dcdee1) 12px 0 / 1px 100% no-repeat; }
.t { background: linear-gradient(#dcdee1, #dcdee1) 12px 0 / 1px 100% no-repeat, linear-gradient(#dcdee1, #dcdee1) 12px 11px / 13px 1px no-repeat; }
.l { background: linear-gradient(#dcdee1, #dcdee1) 12px 0 / 1px 12px no-repeat, linear-gradient(#dcdee1, #dcdee1) 12px 11px / 13px 1px no-repeat; }
.x { position: relative; }
.x::before { content: ""; position: absolute; left: 5px; top: 4px; width: 14px; height: 14px; border: 1px solid #b4b7bb; border-radius: 50%; background: #fbfbfb; }
.m::after { content: ""; position: absolute; left: 8px; top: 10px; width: 8px; height: 2px; background: #666c74; }
.p::after { content: ""; position: absolute; left: 8px; top: 7px; width: 8px; height: 8px; background: linear-gradient(#666c74, #666c74) 0 3px / 8px 2px no-repeat, linear-gradient(#666c74, #666c74) 3px 0 / 2px 8px no-repeat; }
.lab { flex: 1; display: flex; align-items: center; gap: 7px; padding-left: 4px; white-space: nowrap; min-width: 0; }
.sel { background: #8ac0fb; }
.ti { width: 18px; height: 18px; }
.xt { width: 18px; font: italic 14px/18px "Liberation Serif", serif; color: #2a3550; white-space: nowrap; }
.sb-up, .sb-dn { position: absolute; width: 9px; height: 5px; left: 465px; }
.sb-up { top: 21px; }
.sb-dn { bottom: 5px; }
.sb-thumb { position: absolute; left: 465px; width: 6px; background: #a9aeb2; }
.tree-thumb { top: 73px; height: 226px; }

.props { width: 477px; height: 385px; margin: 6px 0 0 1px; flex: none; background: #fff; border: 1px solid #b5b8bc; border-top: 0; border-radius: 0 0 4px 4px; overflow: hidden; position: relative; }
.phead { width: 462px; height: 26px; background: #a9aeb1; display: flex; line-height: 27px; border-bottom: 1px solid #84888c; }
.ph-k { width: 124px; padding-left: 11px; border-right: 1px solid #c2c5c8; }
.ph-v { padding-left: 11px; }
.prow { width: 462px; height: 25px; display: flex; background: #fff; line-height: 24px; }
.prow.alt { background: #ecedef; }
.prow.group-r { background: #b9cde0; color: #6b7b8a; font-weight: 500; }
.pi { width: 25px; height: 25px; flex: none; }
.gl { background: linear-gradient(#dcdee1, #dcdee1) 12px 0 / 1px 100% no-repeat, linear-gradient(#dcdee1, #dcdee1) 12px 12px / 13px 1px no-repeat; }
.chev { position: relative; }
.chev::after { content: ""; position: absolute; left: 6px; top: 9px; width: 6px; height: 6px; border-top: 1.500px solid #8a8f96; border-right: 1.500px solid #8a8f96; transform: rotate(45deg); }
.pk { width: 100px; padding-left: 2px; white-space: nowrap; border-right: 1px solid #cfd1d4; border-bottom: 1px solid #cfd1d4; }
.group-r .pk { border: 0; width: auto; }
.pv { flex: 1; padding-left: 3px; white-space: nowrap; border-bottom: 1px solid #cfd1d4; overflow: hidden; }
.p-up { top: 7px; }
.p-dn { bottom: 6px; }
.prop-thumb { top: 13px; height: 258px; }
.btabs { flex: 1; background: #fff; width: 478px; display: flex; padding: 2px 0 0 7px; align-items: stretch; overflow: hidden; min-height: 0; }
.btab { width: 30px; line-height: 22px; white-space: nowrap; }
.btab.on { width: 46px; margin-left: 8px; background: #a9aeb2; border: 1px solid #8e9296; border-bottom: 0; border-radius: 2px 2px 0 0; text-align: center; line-height: 24px; }

/* view area */
.right { flex: 1; min-width: 0; display: flex; flex-direction: column; }
.vtool { height: 37px; flex: none; background: #f4f5f6; display: flex; align-items: center; padding-left: 3px; border-bottom: 1px solid #c8cacd; }
.vi { width: 28px; height: 28px; }
.vi.wide { width: 32px; }
.chev-i { width: 10px; height: 6px; }
.vsep { width: 1px; height: 28px; background: #c5c7ca; flex: none; }
.ml2 { margin-left: 2px; }
.ml3 { margin-left: 3px; }
.ml4 { margin-left: 4px; }
.ml5 { margin-left: 5px; }
.ml6 { margin-left: 6px; }
.ml7 { margin-left: 7px; }
.ml8 { margin-left: 8px; }
.ml10 { margin-left: 10px; }
.ml11 { margin-left: 11px; }
.ax { font: 9px "Liberation Sans", sans-serif; fill: #222; }
.viewport { flex: 1; min-height: 0; position: relative; overflow: hidden; background: linear-gradient(#b8cfe7, #e9ebef); }
.canvas3d { position: absolute; left: 0; top: 0; width: 100%; height: 100%; }
.triad { position: absolute; left: 32px; top: 677px; width: 60px; height: 50px; }
.tz, .ty { font: 10px "Liberation Sans", sans-serif; }
.tz { fill: #2030e8; }
.ty { fill: #10b030; }
.doctabs { height: 20px; flex: none; background: #ebecef; display: flex; }
.doctab { width: 124px; background: #fff; border: 1px solid #b5b8bc; border-bottom: 0; border-left: 0; display: flex; align-items: center; white-space: nowrap; }
.doclogo { width: 20px; height: 20px; margin-right: 9px; }

/* status */
.status { height: 33px; flex: none; background: #ebecef; border-top: 1px solid #b0b2b5; border-bottom: 1px solid #b0b2b5; display: flex; justify-content: space-between; align-items: center; padding: 0 2px 0 6px; }
.st-l { color: #7a7e84; }
.st-r { color: #2b2b2b; }

/* taskbar */
.taskbar { height: 50px; flex: none; display: flex; align-items: stretch; background: linear-gradient(90deg, #1f3340, #1c2b3c 60%, #1b2940); color: #fff; }
.tbc { display: flex; align-items: center; justify-content: center; position: relative; }
.w60 { width: 60px; }
.tapp { width: 62px; }
.ml4x { margin-left: 4px; }
.tbi { width: 22px; height: 22px; }
.tbi.big { width: 30px; height: 30px; }
.tba { width: 30px; height: 36px; }
.on-line::after { content: ""; position: absolute; left: 5px; right: 5px; bottom: 0; height: 3px; background: #76b9ed; }
.active-app { background: #3d5361; width: 61px; }
.active-app::after { content: ""; position: absolute; left: 0; right: 0; bottom: 0; height: 3px; background: #76b9ed; }
.active-app .tba { height: 30px; }
.tray { margin-left: auto; width: 440px; display: flex; align-items: center; }
.t-cloud { width: 30px; height: 20px; }
.t-temp { margin-left: 10px; font-size: 18px; width: 40px; white-space: nowrap; }
.t-wea { margin-left: 12px; font-size: 18px; width: 18px; }
.t-car { margin-left: 30px; width: 16px; height: 9px; }
.t-bat { margin-left: 12px; width: 20px; height: 14px; }
.t-wifi { margin-left: 13px; width: 15px; height: 15px; }
.t-snd { margin-left: 12px; width: 19px; height: 14px; }
.t-ime { margin-left: 9px; font-size: 20px; width: 21px; }
.t-clock { margin-left: 17px; width: 64px; display: flex; flex-direction: column; align-items: center; line-height: 23px; white-space: nowrap; }
.t-note { margin-left: 31px; width: 20px; height: 20px; }
```
FILE: mesh.js
```js
// Draws the triangulated tensile bar in the 3D view (page coordinates, shifted into the viewport).
(function () {
  var svg = document.getElementById('mesh');
  var out = [];
  var ox = 486, oy = 208;
  function P(theta, y) {
    var cx = 1011.5 + (y - 331) * 0.0325;
    return [cx + 62.5 * Math.sin(theta) - ox, y + 5 * Math.cos(theta) - oy];
  }
  function lerp(a, b, t) { return Math.round(a + (b - a) * t); }
  function mix(c1, c2, t) {
    return 'rgb(' + lerp(c1[0], c2[0], t) + ',' + lerp(c1[1], c2[1], t) + ',' + lerp(c1[2], c2[2], t) + ')';
  }
  function poly(pts, fill) {
    out.push('<polygon shape-rendering="crispEdges" fill="' + fill + '" points="' + pts.map(function (p) { return p[0].toFixed(1) + ',' + p[1].toFixed(1); }).join(' ') + '"/>');
  }
  var lines = '';
  function seg(a, b) { lines += 'M' + a[0].toFixed(1) + ' ' + a[1].toFixed(1) + 'L' + b[0].toFixed(1) + ' ' + b[1].toFixed(1); }

  var h = 23, N = 8, step = Math.PI / 2 / N, top = 335, end = 1010;
  // Vertical shading bands: each facet column is part blue, part grey
  for (var i = -N; i < N; i++) {
    var t1 = i * step, t2 = (i + 1) * step, n = (i + N) / (2 * N);
    var blue = mix([38, 72, 112], [66, 122, 176], Math.min(1, n * 1.9));
    var grey = mix([232, 234, 236], [150, 150, 150], Math.max(0, n - 0.5) * 2);
    var frac = n < 0.15 ? 1 : n < 0.4 ? 0.68 : 0.52;
    var tm = t1 + (t2 - t1) * frac;
    poly([P(t1, top), P(tm, top), P(tm, end), P(t1, end)], blue);
    if (frac < 1) poly([P(tm, top), P(t2, top), P(t2, end), P(tm, end)], grey);
  }
  // Triangulated lattice lines
  for (i = -N; i < N; i++) {
    t1 = i * step; t2 = (i + 1) * step;
    var odd = (i + N) % 2;
    for (var k = -1; k < 30; k++) {
      var ya0 = top + k * h + (odd ? h / 2 : 0), ya1 = ya0 + h;
      var yb0 = top + k * h + (odd ? 0 : h / 2), yb1 = yb0 + h;
      var A0 = P(t1, Math.max(top, ya0)), A1 = P(t1, Math.max(top, ya1));
      var B0 = P(t2, Math.max(top, yb0)), B1 = P(t2, Math.max(top, yb1));
      if (odd) { seg(A0, B1); seg(A1, B1); } else { seg(A0, B0); seg(A1, B0); }
      seg(A0, A1);
    }
  }
  // Denser, irregular band of elements just below the rim
  var extra = [[-1.2, 372, -0.7, 345], [-0.7, 345, -0.2, 372], [-0.2, 372, 0.3, 350], [0.3, 350, 0.7, 372], [0.7, 372, 1.1, 346], [1.1, 346, 1.4, 368], [-1.3, 362, -0.2, 350], [-0.2, 350, 0.6, 360], [0.6, 360, 1.4, 392], [0.15, 355, 0.55, 400], [0.55, 400, 1.05, 425], [0.85, 350, 1.3, 420]];
  extra.forEach(function (e) { seg(P(e[0], e[1]), P(e[2], e[3])); });
  out.push('<path d="' + lines + '" fill="none" stroke="#000" stroke-width="1.400" shape-rendering="crispEdges"/>');

  // Silhouette edges and the black rim
  var a = P(-Math.PI / 2, 331), b = P(-Math.PI / 2, 1000), c = P(Math.PI / 2, 331), d = P(Math.PI / 2, 1000);
  out.push('<path d="M' + a + 'L' + b + 'M' + c + 'L' + d + '" stroke="#000" stroke-width="4" fill="none" shape-rendering="crispEdges"/>');
  out.push('<ellipse cx="' + (1011.5 - ox) + '" cy="' + (329 - oy) + '" rx="63" ry="9" fill="#000"/>');
  svg.innerHTML = out.join('');
})();
```
